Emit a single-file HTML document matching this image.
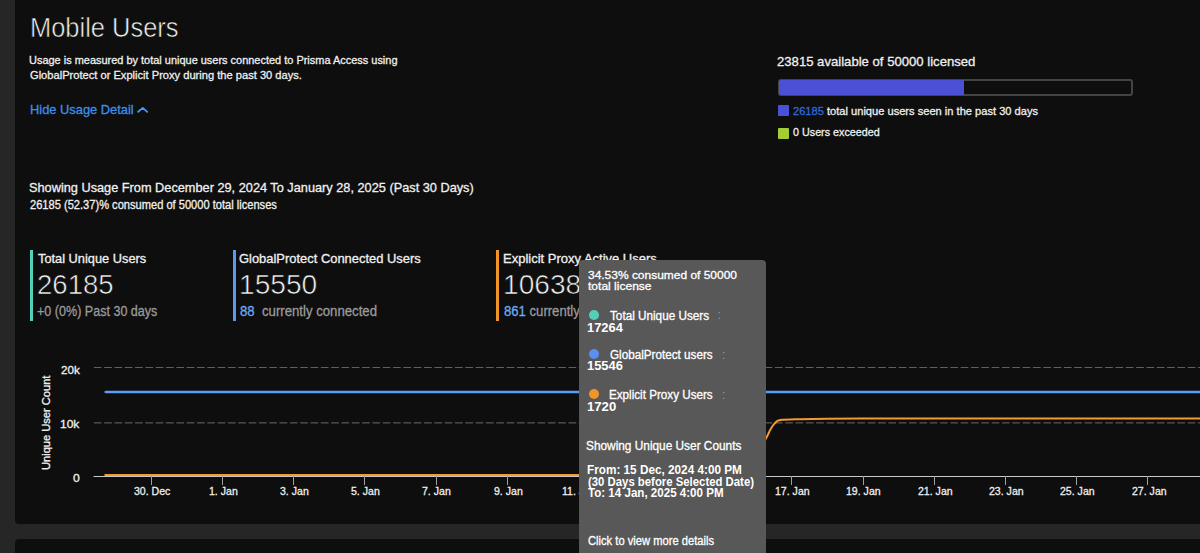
<!DOCTYPE html>
<html><head><meta charset='utf-8'><style>
html,body{margin:0;padding:0;width:1200px;height:553px;overflow:hidden;background:#262626;}
.t{position:absolute;white-space:pre;line-height:40px;font-family:"Liberation Sans",sans-serif;transform-origin:0 0;}
.panel{position:absolute;background:#0e0e0e;border-radius:4px;}
</style></head><body>
<div class='panel' style='left:15px;top:-10px;width:1200px;height:533.5px'></div>
<div class='panel' style='left:15px;top:539px;width:1200px;height:40px'></div>
<div style='position:absolute;left:778px;top:79px;width:355px;height:17px;box-sizing:border-box;border:2px solid #444;border-radius:3px;background:#0e0e0e'></div>
<div style='position:absolute;left:779px;top:80px;width:185px;height:15px;background:#4b51d6;border-radius:2px 0 0 2px'></div>
<div style='position:absolute;left:778px;top:105px;width:11px;height:11px;background:#4b51d6;border-radius:1px'></div>
<div style='position:absolute;left:778px;top:128px;width:11px;height:11px;background:#a4cd35;border-radius:1px'></div>
<div style='position:absolute;left:30px;top:250px;width:3px;height:71px;background:#55d0bb'></div>
<div style='position:absolute;left:232.5px;top:250px;width:3px;height:71px;background:#5a9af5'></div>
<div style='position:absolute;left:496px;top:250px;width:3px;height:71px;background:#f0952a'></div>
<svg width='20' height='12' style='position:absolute;left:136px;top:104px'><path d='M2.2 7.8 L6.8 3.9 L11.2 7.8' fill='none' stroke='#4a9af5' stroke-width='1.8' stroke-linecap='round' stroke-linejoin='round'/></svg>
<svg width='1200' height='553' style='position:absolute;left:0;top:0'>
<line x1='93.8' y1='367.5' x2='1200' y2='367.5' stroke='#5f5f5f' stroke-width='1' stroke-dasharray='7.7 2.62'/>
<line x1='93.8' y1='422.9' x2='1200' y2='422.9' stroke='#6a6a6a' stroke-width='1' stroke-dasharray='7.7 2.62'/>
<line x1='93.5' y1='476.5' x2='1200' y2='476.5' stroke='#c8c8c8' stroke-width='1'/>
<line x1='151.5' y1='476' x2='151.5' y2='485' stroke='#a0a0a0' stroke-width='1'/>
<line x1='222.5' y1='476' x2='222.5' y2='485' stroke='#a0a0a0' stroke-width='1'/>
<line x1='293.5' y1='476' x2='293.5' y2='485' stroke='#a0a0a0' stroke-width='1'/>
<line x1='364.5' y1='476' x2='364.5' y2='485' stroke='#a0a0a0' stroke-width='1'/>
<line x1='436.5' y1='476' x2='436.5' y2='485' stroke='#a0a0a0' stroke-width='1'/>
<line x1='507.5' y1='476' x2='507.5' y2='485' stroke='#a0a0a0' stroke-width='1'/>
<line x1='791.5' y1='476' x2='791.5' y2='485' stroke='#a0a0a0' stroke-width='1'/>
<line x1='863.5' y1='476' x2='863.5' y2='485' stroke='#a0a0a0' stroke-width='1'/>
<line x1='934.5' y1='476' x2='934.5' y2='485' stroke='#a0a0a0' stroke-width='1'/>
<line x1='1005.5' y1='476' x2='1005.5' y2='485' stroke='#a0a0a0' stroke-width='1'/>
<line x1='1076.5' y1='476' x2='1076.5' y2='485' stroke='#a0a0a0' stroke-width='1'/>
<line x1='1147.5' y1='476' x2='1147.5' y2='485' stroke='#a0a0a0' stroke-width='1'/>
<line x1='105.7' y1='391.9' x2='1200' y2='391.9' stroke='#5a9ef8' stroke-width='2.5' stroke-linecap='round'/>
<path d='M104.5 474.9 L745 474.9 L758 452 C759.42 449.58 764.43 441.25 766.5 437.5 C768.57 433.75 769.03 431.85 770.4 429.5 C771.77 427.15 773.08 424.97 774.7 423.4 C776.32 421.83 775.88 420.80 780.1 420.1 C784.32 419.40 786.68 419.45 800 419.2 C813.32 418.95 826.67 418.73 860 418.6 C893.33 418.47 943.33 418.43 1000 418.4 C1056.67 418.37 1166.67 418.40 1200 418.4' fill='none' stroke='#f39a33' stroke-width='2'/>
</svg>
<div class='t' style='left:29.91px;top:8px;font-size:27px;font-weight:400;color:#f2f2f2;transform:scaleX(0.9426);-webkit-text-stroke:0.6px #0e0e0e'>Mobile Users</div><div class='t' style='left:29.35px;top:40px;font-size:11.6px;font-weight:400;color:#f0f0f0;transform:scaleX(0.9451);-webkit-text-stroke:0.3px #f0f0f0'>Usage is measured by total unique users connected to Prisma Access using</div><div class='t' style='left:30.30px;top:55px;font-size:11.6px;font-weight:400;color:#f0f0f0;transform:scaleX(0.9590);-webkit-text-stroke:0.3px #f0f0f0'>GlobalProtect or Explicit Proxy during the past 30 days.</div><div class='t' style='left:29.53px;top:90px;font-size:13.3px;font-weight:400;color:#3f8fe8;transform:scaleX(0.9670);-webkit-text-stroke:0.3px #3f8fe8'>Hide Usage Detail</div><div class='t' style='left:777.12px;top:42px;font-size:13.4px;font-weight:400;color:#f0f0f0;transform:scaleX(0.9796);-webkit-text-stroke:0.3px #f0f0f0'>23815 available of 50000 licensed</div><div class='t' style='left:793.30px;top:91px;font-size:11.8px;font-weight:400;color:#f0f0f0;transform:scaleX(0.9412);-webkit-text-stroke:0.3px #f0f0f0'><span style="color:#3068dc;-webkit-text-stroke:0.3px #3068dc">26185</span> total unique users seen in the past 30 days</div><div class='t' style='left:793.30px;top:112px;font-size:11.8px;font-weight:400;color:#f0f0f0;transform:scaleX(0.9126);-webkit-text-stroke:0.3px #f0f0f0'>0 Users exceeded</div><div class='t' style='left:29.45px;top:168px;font-size:13.4px;font-weight:400;color:#f0f0f0;transform:scaleX(0.9519);-webkit-text-stroke:0.3px #f0f0f0'>Showing Usage From December 29, 2024 To January 28, 2025 (Past 30 Days)</div><div class='t' style='left:30.40px;top:185px;font-size:12.0px;font-weight:400;color:#f0f0f0;transform:scaleX(0.9251);-webkit-text-stroke:0.3px #f0f0f0'>26185 (52.37)% consumed of 50000 total licenses</div><div class='t' style='left:38.00px;top:239px;font-size:12.6px;font-weight:400;color:#f0f0f0;transform:scaleX(1.0170);-webkit-text-stroke:0.3px #f0f0f0'>Total Unique Users</div><div class='t' style='left:37.48px;top:265px;font-size:27px;font-weight:400;color:#f2f2f2;transform:scaleX(1.0205);-webkit-text-stroke:0.6px #0e0e0e'>26185</div><div class='t' style='left:37.09px;top:292px;font-size:13.8px;font-weight:400;color:#9a9a9a;transform:scaleX(0.9099);-webkit-text-stroke:0.3px #9a9a9a'>+0 (0%) Past 30 days</div><div class='t' style='left:239.37px;top:239px;font-size:12.6px;font-weight:400;color:#f0f0f0;transform:scaleX(1.0261);-webkit-text-stroke:0.3px #f0f0f0'>GlobalProtect Connected Users</div><div class='t' style='left:238.92px;top:265px;font-size:27px;font-weight:400;color:#f2f2f2;transform:scaleX(1.0417);-webkit-text-stroke:0.6px #0e0e0e'>15550</div><div class='t' style='left:240.40px;top:292px;font-size:13.8px;font-weight:400;color:#9a9a9a;transform:scaleX(0.9552);-webkit-text-stroke:0.3px #9a9a9a'><span style="color:#6aa8f8;-webkit-text-stroke:0.3px #6aa8f8">88</span>&nbsp; currently connected</div><div class='t' style='left:503.27px;top:239px;font-size:12.6px;font-weight:400;color:#f0f0f0;transform:scaleX(1.0318);-webkit-text-stroke:0.3px #f0f0f0'>Explicit Proxy Active Users</div><div class='t' style='left:502.92px;top:265px;font-size:27px;font-weight:400;color:#f2f2f2;transform:scaleX(1.0417);-webkit-text-stroke:0.6px #0e0e0e'>10638</div><div class='t' style='left:504.30px;top:292px;font-size:13.8px;font-weight:400;color:#9a9a9a;transform:scaleX(0.9503);-webkit-text-stroke:0.3px #9a9a9a'><span style="color:#6aa8f8;-webkit-text-stroke:0.3px #6aa8f8">861</span> currently connected</div><div class='t' style='left:60.80px;top:350px;font-size:11.6px;font-weight:400;color:#f0f0f0;transform:scaleX(1.0053);-webkit-text-stroke:0.3px #f0f0f0'>20k</div><div class='t' style='left:60.27px;top:404px;font-size:11.6px;font-weight:400;color:#f0f0f0;transform:scaleX(1.0333);-webkit-text-stroke:0.3px #f0f0f0'>10k</div><div class='t' style='left:73.20px;top:458px;font-size:11.6px;font-weight:400;color:#f0f0f0;transform:scaleX(1.0500);-webkit-text-stroke:0.3px #f0f0f0'>0</div>
<div class='t' style='left:133.96px;top:471px;font-size:11.8px;color:#f0f0f0;transform:scaleX(0.8947);-webkit-text-stroke:0.3px #f0f0f0'>30. Dec</div><div class='t' style='left:208.70px;top:471px;font-size:11.8px;color:#f0f0f0;transform:scaleX(0.8947);-webkit-text-stroke:0.3px #f0f0f0'>1. Jan</div><div class='t' style='left:279.86px;top:471px;font-size:11.8px;color:#f0f0f0;transform:scaleX(0.8947);-webkit-text-stroke:0.3px #f0f0f0'>3. Jan</div><div class='t' style='left:351.02px;top:471px;font-size:11.8px;color:#f0f0f0;transform:scaleX(0.8947);-webkit-text-stroke:0.3px #f0f0f0'>5. Jan</div><div class='t' style='left:422.18px;top:471px;font-size:11.8px;color:#f0f0f0;transform:scaleX(0.8947);-webkit-text-stroke:0.3px #f0f0f0'>7. Jan</div><div class='t' style='left:493.78px;top:471px;font-size:11.8px;color:#f0f0f0;transform:scaleX(0.8947);-webkit-text-stroke:0.3px #f0f0f0'>9. Jan</div><div class='t' style='left:562.26px;top:471px;font-size:11.8px;color:#f0f0f0;transform:scaleX(0.8947);-webkit-text-stroke:0.3px #f0f0f0'>11. Jan</div><div class='t' style='left:632.97px;top:471px;font-size:11.8px;color:#f0f0f0;transform:scaleX(0.8947);-webkit-text-stroke:0.3px #f0f0f0'>13. Jan</div><div class='t' style='left:704.13px;top:471px;font-size:11.8px;color:#f0f0f0;transform:scaleX(0.8947);-webkit-text-stroke:0.3px #f0f0f0'>15. Jan</div><div class='t' style='left:775.29px;top:471px;font-size:11.8px;color:#f0f0f0;transform:scaleX(0.8947);-webkit-text-stroke:0.3px #f0f0f0'>17. Jan</div><div class='t' style='left:846.45px;top:471px;font-size:11.8px;color:#f0f0f0;transform:scaleX(0.8947);-webkit-text-stroke:0.3px #f0f0f0'>19. Jan</div><div class='t' style='left:918.06px;top:471px;font-size:11.8px;color:#f0f0f0;transform:scaleX(0.8947);-webkit-text-stroke:0.3px #f0f0f0'>21. Jan</div><div class='t' style='left:989.22px;top:471px;font-size:11.8px;color:#f0f0f0;transform:scaleX(0.8947);-webkit-text-stroke:0.3px #f0f0f0'>23. Jan</div><div class='t' style='left:1060.38px;top:471px;font-size:11.8px;color:#f0f0f0;transform:scaleX(0.8947);-webkit-text-stroke:0.3px #f0f0f0'>25. Jan</div><div class='t' style='left:1131.54px;top:471px;font-size:11.8px;color:#f0f0f0;transform:scaleX(0.8947);-webkit-text-stroke:0.3px #f0f0f0'>27. Jan</div>
<div class='t' style='left:26.20px;top:469.71px;font-size:11px;color:#f0f0f0;transform:rotate(-90deg) scaleX(1.0097);-webkit-text-stroke:0.3px #f0f0f0'>Unique User Count</div>
<div style='position:absolute;left:579px;top:260px;width:187px;height:320px;background:#585858;border-radius:4px'></div>
<div style='position:absolute;left:589px;top:309.8px;width:10px;height:10px;border-radius:50%;background:#55cdb8'></div>
<div style='position:absolute;left:589px;top:349.2px;width:10px;height:10px;border-radius:50%;background:#5a8ef0'></div>
<div style='position:absolute;left:589px;top:389.4px;width:10px;height:10px;border-radius:50%;background:#f0952a'></div>
<div class='t' style='left:717.5px;top:295px;font-size:12px;color:#9a9a9a'>:</div>
<div class='t' style='left:722px;top:335px;font-size:12px;color:#9a9a9a'>:</div>
<div class='t' style='left:722px;top:375px;font-size:12px;color:#9a9a9a'>:</div>
<div class='t' style='left:587.70px;top:255px;font-size:11.5px;font-weight:400;color:#ffffff;transform:scaleX(1.0399);-webkit-text-stroke:0.3px #ffffff'>34.53% consumed of 50000</div><div class='t' style='left:587.70px;top:266px;font-size:11.5px;font-weight:400;color:#ffffff;transform:scaleX(1.0467);-webkit-text-stroke:0.3px #ffffff'>total license</div><div class='t' style='left:609.70px;top:296px;font-size:12.0px;font-weight:400;color:#ffffff;transform:scaleX(0.9772);-webkit-text-stroke:0.3px #ffffff'>Total Unique Users</div><div class='t' style='left:586.65px;top:308px;font-size:12.3px;font-weight:700;color:#ffffff;transform:scaleX(1.0485)'>17264</div><div class='t' style='left:609.70px;top:335px;font-size:12.0px;font-weight:400;color:#ffffff;transform:scaleX(0.9743);-webkit-text-stroke:0.3px #ffffff'>GlobalProtect users</div><div class='t' style='left:586.65px;top:346px;font-size:12.3px;font-weight:700;color:#ffffff;transform:scaleX(1.0485)'>15546</div><div class='t' style='left:608.73px;top:375px;font-size:12.0px;font-weight:400;color:#ffffff;transform:scaleX(0.9717);-webkit-text-stroke:0.3px #ffffff'>Explicit Proxy Users</div><div class='t' style='left:586.63px;top:387px;font-size:12.3px;font-weight:700;color:#ffffff;transform:scaleX(1.0692)'>1720</div><div class='t' style='left:586.41px;top:426px;font-size:12.0px;font-weight:400;color:#ffffff;transform:scaleX(0.9872);-webkit-text-stroke:0.3px #ffffff'>Showing Unique User Counts</div><div class='t' style='left:586.74px;top:450px;font-size:12.3px;font-weight:700;color:#ffffff;transform:scaleX(0.9563)'>From: 15 Dec, 2024 4:00 PM</div><div class='t' style='left:587.70px;top:462px;font-size:12.3px;font-weight:700;color:#ffffff;transform:scaleX(0.9235)'>(30 Days before Selected Date)</div><div class='t' style='left:587.70px;top:473px;font-size:12.3px;font-weight:700;color:#ffffff;transform:scaleX(0.9413)'>To: 14 Jan, 2025 4:00 PM</div><div class='t' style='left:587.70px;top:521px;font-size:12.0px;font-weight:400;color:#ffffff;transform:scaleX(0.9311);-webkit-text-stroke:0.3px #ffffff'>Click to view more details</div>
</body></html>
